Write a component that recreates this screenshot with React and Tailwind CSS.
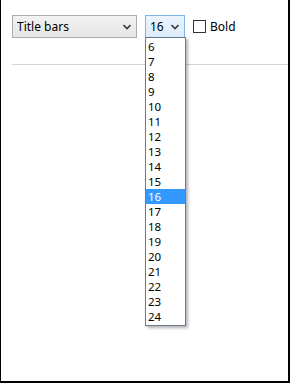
import React from "react";

function Chevron() {
  return (
    <svg width="8" height="6" viewBox="0 0 8 6" className="block">
      <path d="M0.5 1 L4 4.5 L7.5 1" fill="none" stroke="#3c3c3c" strokeWidth="1.6" />
    </svg>
  );
}

export default function App() {
  const sizes = [];
  for (let i = 6; i <= 24; i++) sizes.push(i);

  return (
    <div
      className="relative w-[290px] h-[383px] bg-white border-l border-r-2 border-b-2 border-black overflow-hidden"
      style={{ fontFamily: '"Noto Sans", "Open Sans", sans-serif' }}
    >
      <div className="flex items-center pl-[11px] pt-[15px]">
        <div className="flex items-center justify-between w-[125px] h-[23px] border border-[#acacac] bg-gradient-to-b from-[#f2f2f2] to-[#e5e5e5] pl-[4px] pr-[5px]">
          <span className="text-[12px] leading-none text-black">Title bars</span>
          <Chevron />
        </div>
        <div className="flex items-center justify-between ml-[8px] w-[40px] h-[23px] border border-[#7eb4ea] bg-gradient-to-b from-[#ecf4fc] to-[#dcecfc] pl-[4px] pr-[5px]">
          <span className="text-[12px] leading-none text-black">16</span>
          <Chevron />
        </div>
        <div className="ml-[8px] w-[13px] h-[13px] border border-[#333333] bg-white" />
        <span className="ml-[4px] text-[12px] leading-none text-black">Bold</span>
      </div>
      <div className="ml-[11px] mt-[26px] h-px bg-[#d5d5d5]" />

      <div className="absolute left-[144px] top-[37px] w-[41px] border border-[#6b7a8c] bg-white py-[1px] shadow-[2px_2px_3px_rgba(0,0,0,0.3)]">
        {sizes.map((s) => (
          <div
            key={s}
            className={
              "h-[15px] pl-[2px] text-[11.5px] leading-[15px] " +
              (s === 16 ? "bg-[#3399ff] text-white" : "text-black")
            }
          >
            {s}
          </div>
        ))}
      </div>
    </div>
  );
}
